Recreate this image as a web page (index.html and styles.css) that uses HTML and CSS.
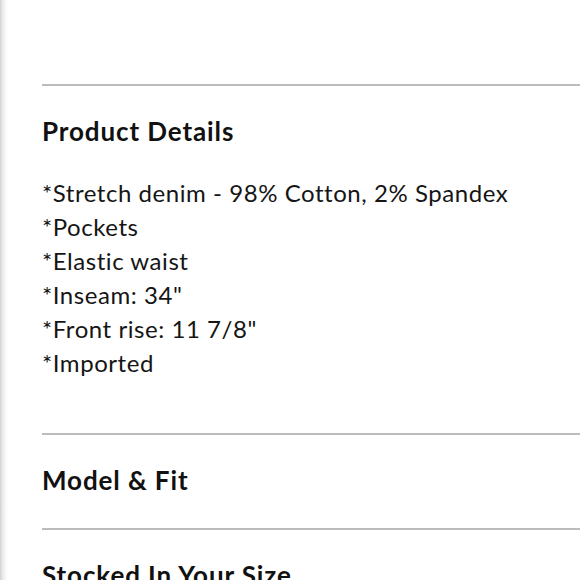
FILE: index.html
```html
<!DOCTYPE html>
<html lang="en">
<head>
<meta charset="utf-8">
<title>Product Details</title>
<link rel="stylesheet" href="styles.css">
</head>
<body>
<div class="page">
  <div class="top-space"></div>
  <section class="section">
    <h2 class="section-title">Product Details</h2>
    <div class="details">
      <div class="detail-line">*Stretch denim - 98% Cotton, 2% Spandex</div>
      <div class="detail-line">*Pockets</div>
      <div class="detail-line">*Elastic waist</div>
      <div class="detail-line">*Inseam: 34"</div>
      <div class="detail-line">*Front rise: 11 7/8"</div>
      <div class="detail-line">*Imported</div>
    </div>
  </section>
  <section class="section">
    <h2 class="section-title">Model &amp; Fit</h2>
  </section>
  <section class="section">
    <h2 class="section-title">Stocked In Your Size</h2>
  </section>
</div>
</body>
</html>
```
FILE: styles.css
```css
html, body {
  margin: 0;
  padding: 0;
  height: 100%;
  overflow: hidden;
}
body {
  background: linear-gradient(to right, #cfcfcf 0px, #e6e6e6 2px, #f6f6f6 5px, #ffffff 8px);
  font-family: Lato, "Open Sans", sans-serif;
  color: #111;
}
.page {
  padding-left: 42px;
}
.top-space {
  height: 84px;
}
.section {
  border-top: 2px solid #bcbcbc;
  padding: 28px 0 31px;
}
.section-title {
  margin: 0;
  font-size: 26px;
  line-height: 34px;
  font-weight: 700;
  letter-spacing: 0.9px;
  color: #111;
}
.details {
  margin-top: 28px;
  padding-bottom: 22px;
  font-size: 24px;
  line-height: 34px;
  font-weight: 400;
  letter-spacing: 0.55px;
  color: #151515;
}
```
